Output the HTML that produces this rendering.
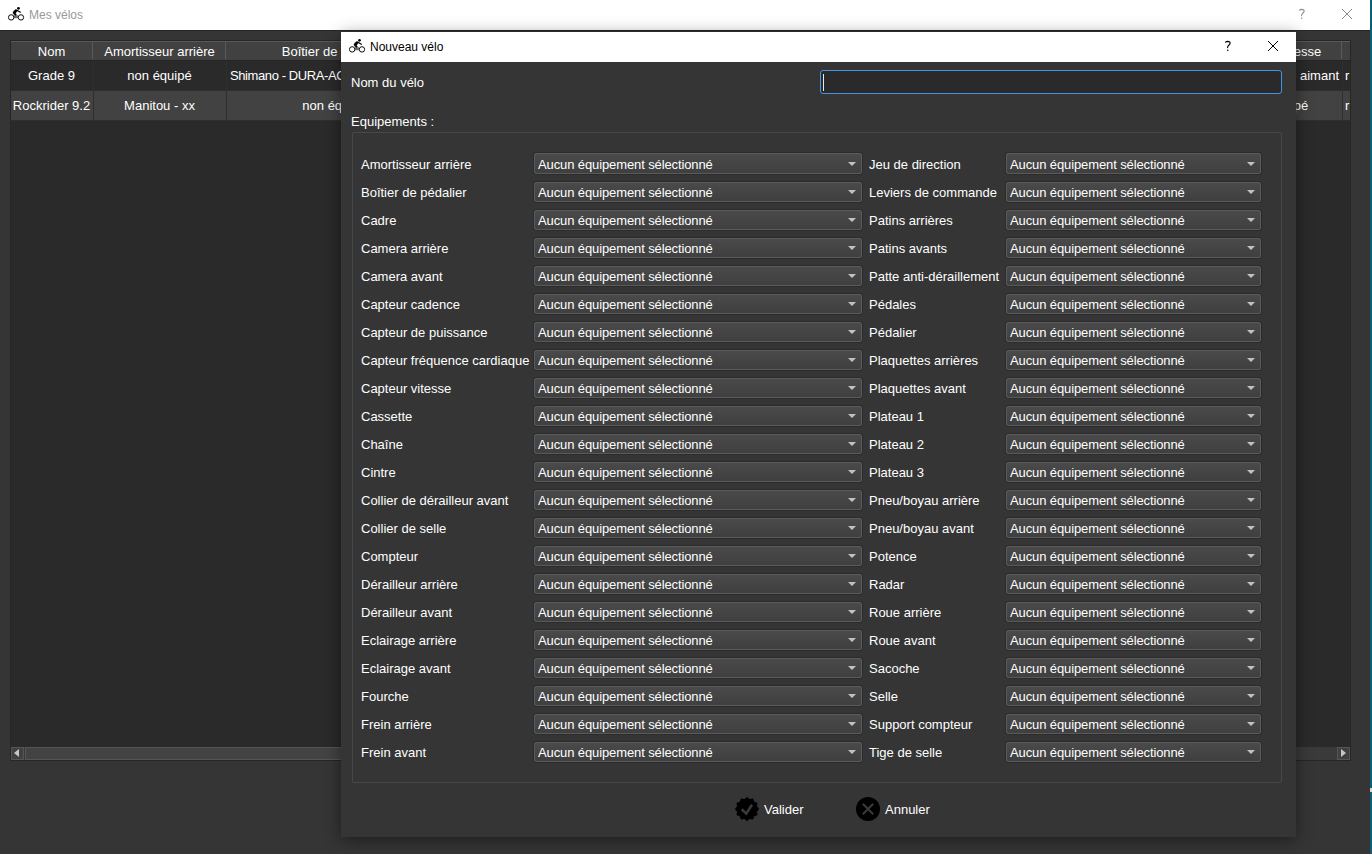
<!DOCTYPE html>
<html><head><meta charset="utf-8">
<style>
*{margin:0;padding:0;box-sizing:border-box}
html,body{width:1372px;height:854px;overflow:hidden;background:#353535;font-family:"Liberation Sans",sans-serif;}
.a{position:absolute}
.t{position:absolute;font-size:13px;line-height:15px;color:#fff;white-space:nowrap}
.cb{letter-spacing:-0.11px}
.tt{position:absolute;font-size:12px;line-height:14px;white-space:nowrap}
.bk{position:absolute}
.combo{position:absolute;height:21px;border:1px solid #5b5b5b;border-radius:2px;background:linear-gradient(#4a4a4a,#3f3f3f);box-shadow:0 0 0 1px rgba(0,0,0,0.18)}
.arr{position:absolute;width:0;height:0;border-left:4px solid transparent;border-right:4px solid transparent;border-top:4.5px solid #c2c2c2}
</style></head><body>
<div class="a" style="left:0;top:0;width:1370px;height:30px;background:#fff"></div>
<div class="a" style="left:0;top:30px;width:1370px;height:1px;background:#262626"></div>
<div class="a" style="left:1370px;top:0;width:2px;height:854px;background:#0f5e74"></div>
<div class="a" style="left:1370px;top:788px;width:2px;height:4px;background:#d8d8d8"></div>
<svg class="bk" style="left:5px;top:4px" width="22" height="20" viewBox="0 0 22 20">
<path d="M8.9 11.2 L12.9 11.2 L13.1 14.3 L8.9 14.3 Z" fill="#707070"/>
<circle cx="6.15" cy="13.4" r="2.7" fill="none" stroke="#000" stroke-width="0.95"/>
<circle cx="15.95" cy="13.4" r="2.7" fill="none" stroke="#000" stroke-width="0.95"/>
<circle cx="13.47" cy="4.33" r="1.35" fill="#000"/>
<path d="M10.2 5.6 L11.9 5.7 L12.7 6.6 L11.3 8.3 L10.6 9.4 L11.6 10.9 L10.4 11.6 L8.6 10.2 L7.9 8.6 L8.4 7.4 Z" fill="#000" stroke="#000" stroke-width="0.3" stroke-linejoin="round"/>
<path d="M11.9 6.2 L15.4 8.2" fill="none" stroke="#000" stroke-width="1.2" stroke-linecap="round"/>
</svg>
<div class="tt" style="left:29px;top:8px;color:#999">Mes vélos</div>
<svg class="a" style="left:1294px;top:5px" width="16" height="18" viewBox="0 0 16 18"><path d="M5.6 5.1 Q6.2 4.4 7.9 4.4 Q10.1 4.5 10.1 6.1 Q10.1 7.3 8.8 8.3 Q7.6 9.2 7.6 10.6" fill="none" stroke="#8f8f8f" stroke-width="1.15" stroke-linecap="round"/><circle cx="7.75" cy="13.2" r="0.8" fill="#8f8f8f"/></svg>\n<svg class="a" style="left:1341px;top:8px" width="12" height="12" viewBox="0 0 12 12"><path d="M1 1 L11 11 M11 1 L1 11" stroke="#8a8a8a" stroke-width="1"/></svg>
<div class="a" style="left:10px;top:40px;width:1341px;height:721px;background:#2a2a2a;border:1px solid #262626"></div>
<div class="a" style="left:11px;top:41px;width:1339px;height:19px;background:#414141;border-top:1px solid #595959"></div>
<div class="a" style="left:11px;top:60px;width:1339px;height:1px;background:#262626"></div>
<div class="a" style="left:11px;top:61px;width:1339px;height:29px;background:#2a2a2a"></div>
<div class="a" style="left:11px;top:91px;width:1339px;height:29px;background:#424242"></div>
<div class="a" style="left:11px;top:90px;width:1339px;height:1px;background:#2f2f2f"></div>
<div class="a" style="left:11px;top:120px;width:1339px;height:1px;background:#2f2f2f"></div>
<div class="a" style="left:92px;top:42px;width:1px;height:17px;background:#5a5a5a"></div>
<div class="a" style="left:93px;top:61px;width:1px;height:60px;background:#2f2f2f"></div>
<div class="a" style="left:225px;top:42px;width:1px;height:17px;background:#5a5a5a"></div>
<div class="a" style="left:226px;top:61px;width:1px;height:60px;background:#2f2f2f"></div>
<div class="a" style="left:442px;top:42px;width:1px;height:17px;background:#5a5a5a"></div>
<div class="a" style="left:443px;top:61px;width:1px;height:60px;background:#2f2f2f"></div>
<div class="a" style="left:1341px;top:42px;width:1px;height:17px;background:#5a5a5a"></div>
<div class="a" style="left:1342px;top:61px;width:1px;height:60px;background:#2f2f2f"></div>
<div class="t" style="left:11px;top:44px;width:81px;text-align:center">Nom</div>
<div class="t" style="left:93px;top:44px;width:133px;text-align:center">Amortisseur arrière</div>
<div class="t" style="left:227px;top:44px;width:215px;text-align:center">Boîtier de pédalier</div>
<div class="t" style="left:1211px;top:44px;width:130px;text-align:center">Capteur vitesse</div>
<div class="t" style="left:1342px;top:44px;width:100px;overflow:hidden;"></div>
<div class="t" style="left:11px;top:68px;width:81px;text-align:center">Grade 9</div>
<div class="t" style="left:93px;top:68px;width:133px;text-align:center">non équipé</div>
<div class="t" style="left:230px;top:68px;letter-spacing:-0.4px">Shimano - DURA-ACE</div>
<div class="t" style="left:1200px;top:68px;width:139px;text-align:right">Sigma - aimant</div>
<div class="t" style="left:1345px;top:68px;width:5px;overflow:hidden">r</div>
<div class="t" style="left:11px;top:98px;width:81px;text-align:center">Rockrider 9.2</div>
<div class="t" style="left:93px;top:98px;width:133px;text-align:center">Manitou - xx</div>
<div class="t" style="left:227px;top:98px;width:215px;text-align:center">non équipé</div>
<div class="t" style="left:1211px;top:98px;width:130px;text-align:center">non équipé</div>
<div class="t" style="left:1345px;top:98px;width:5px;overflow:hidden">r</div>
<div class="a" style="left:11px;top:747px;width:1339px;height:13px;background:#3a3a3a"></div>
<div class="a" style="left:11px;top:747px;width:13px;height:13px;background:#404040;border:1px solid #555"></div>
<div class="a" style="left:14px;top:749px;width:0;height:0;border-top:4.5px solid transparent;border-bottom:4.5px solid transparent;border-right:5px solid #c6c6c6"></div>
<div class="a" style="left:25px;top:747px;width:900px;height:13px;background:#434343;border:1px solid #555"></div>
<div class="a" style="left:1337px;top:747px;width:13px;height:13px;background:#404040;border:1px solid #555"></div>
<div class="a" style="left:1341px;top:749px;width:0;height:0;border-top:4.5px solid transparent;border-bottom:4.5px solid transparent;border-left:5px solid #c6c6c6"></div>
<div class="a" style="left:341px;top:32px;width:955px;height:805px;background:#353535;box-shadow:0 3px 16px rgba(0,0,0,0.45)"></div>
<div class="a" style="left:341px;top:32px;width:955px;height:30px;background:#fff"></div>
<svg class="bk" style="left:346px;top:36px" width="22" height="20" viewBox="0 0 22 20">
<path d="M8.9 11.2 L12.9 11.2 L13.1 14.3 L8.9 14.3 Z" fill="#707070"/>
<circle cx="6.15" cy="13.4" r="2.7" fill="none" stroke="#000" stroke-width="0.95"/>
<circle cx="15.95" cy="13.4" r="2.7" fill="none" stroke="#000" stroke-width="0.95"/>
<circle cx="13.47" cy="4.33" r="1.35" fill="#000"/>
<path d="M10.2 5.6 L11.9 5.7 L12.7 6.6 L11.3 8.3 L10.6 9.4 L11.6 10.9 L10.4 11.6 L8.6 10.2 L7.9 8.6 L8.4 7.4 Z" fill="#000" stroke="#000" stroke-width="0.3" stroke-linejoin="round"/>
<path d="M11.9 6.2 L15.4 8.2" fill="none" stroke="#000" stroke-width="1.2" stroke-linecap="round"/>
</svg>
<div class="tt" style="left:370px;top:40px;color:#000">Nouveau vélo</div>
<svg class="a" style="left:1220px;top:37px" width="16" height="18" viewBox="0 0 16 18"><path d="M5.6 5.1 Q6.2 4.4 7.9 4.4 Q10.1 4.5 10.1 6.1 Q10.1 7.3 8.8 8.3 Q7.6 9.2 7.6 10.6" fill="none" stroke="#000" stroke-width="1.15" stroke-linecap="round"/><circle cx="7.75" cy="13.2" r="0.8" fill="#000"/></svg>\n<svg class="a" style="left:1267px;top:40px" width="12" height="12" viewBox="0 0 12 12"><path d="M1 1 L11 11 M11 1 L1 11" stroke="#000" stroke-width="1"/></svg>
<div class="t" style="left:351px;top:75px;">Nom du vélo</div>
<div class="a" style="left:820px;top:70px;width:462px;height:24px;background:#2a2a2a;border:1px solid #4393e3;border-radius:3px"></div>
<div class="a" style="left:823px;top:74px;width:1px;height:17px;background:#e8e8e8"></div>
<div class="t" style="left:351px;top:114px;">Equipements :</div>
<div class="a" style="left:352px;top:132px;width:930px;height:651px;border:1px solid #484848;border-radius:2px"></div>
<div class="t" style="left:361px;top:157px;">Amortisseur arrière</div>
<div class="combo" style="left:534px;top:153px;width:328px;height:21px"></div>
<div class="t cb" style="left:538px;top:157px;">Aucun équipement sélectionné</div>
<div class="arr" style="left:848px;top:162px"></div>
<div class="t" style="left:869px;top:157px;">Jeu de direction</div>
<div class="combo" style="left:1006px;top:153px;width:255px;height:21px"></div>
<div class="t cb" style="left:1010px;top:157px;">Aucun équipement sélectionné</div>
<div class="arr" style="left:1247px;top:162px"></div>
<div class="t" style="left:361px;top:185px;">Boîtier de pédalier</div>
<div class="combo" style="left:534px;top:182px;width:328px;height:20px"></div>
<div class="t cb" style="left:538px;top:185px;">Aucun équipement sélectionné</div>
<div class="arr" style="left:848px;top:190px"></div>
<div class="t" style="left:869px;top:185px;">Leviers de commande</div>
<div class="combo" style="left:1006px;top:182px;width:255px;height:20px"></div>
<div class="t cb" style="left:1010px;top:185px;">Aucun équipement sélectionné</div>
<div class="arr" style="left:1247px;top:190px"></div>
<div class="t" style="left:361px;top:213px;">Cadre</div>
<div class="combo" style="left:534px;top:210px;width:328px;height:20px"></div>
<div class="t cb" style="left:538px;top:213px;">Aucun équipement sélectionné</div>
<div class="arr" style="left:848px;top:218px"></div>
<div class="t" style="left:869px;top:213px;">Patins arrières</div>
<div class="combo" style="left:1006px;top:210px;width:255px;height:20px"></div>
<div class="t cb" style="left:1010px;top:213px;">Aucun équipement sélectionné</div>
<div class="arr" style="left:1247px;top:218px"></div>
<div class="t" style="left:361px;top:241px;">Camera arrière</div>
<div class="combo" style="left:534px;top:238px;width:328px;height:20px"></div>
<div class="t cb" style="left:538px;top:241px;">Aucun équipement sélectionné</div>
<div class="arr" style="left:848px;top:246px"></div>
<div class="t" style="left:869px;top:241px;">Patins avants</div>
<div class="combo" style="left:1006px;top:238px;width:255px;height:20px"></div>
<div class="t cb" style="left:1010px;top:241px;">Aucun équipement sélectionné</div>
<div class="arr" style="left:1247px;top:246px"></div>
<div class="t" style="left:361px;top:269px;">Camera avant</div>
<div class="combo" style="left:534px;top:266px;width:328px;height:20px"></div>
<div class="t cb" style="left:538px;top:269px;">Aucun équipement sélectionné</div>
<div class="arr" style="left:848px;top:274px"></div>
<div class="t" style="left:869px;top:269px;">Patte anti-déraillement</div>
<div class="combo" style="left:1006px;top:266px;width:255px;height:20px"></div>
<div class="t cb" style="left:1010px;top:269px;">Aucun équipement sélectionné</div>
<div class="arr" style="left:1247px;top:274px"></div>
<div class="t" style="left:361px;top:297px;">Capteur cadence</div>
<div class="combo" style="left:534px;top:294px;width:328px;height:20px"></div>
<div class="t cb" style="left:538px;top:297px;">Aucun équipement sélectionné</div>
<div class="arr" style="left:848px;top:302px"></div>
<div class="t" style="left:869px;top:297px;">Pédales</div>
<div class="combo" style="left:1006px;top:294px;width:255px;height:20px"></div>
<div class="t cb" style="left:1010px;top:297px;">Aucun équipement sélectionné</div>
<div class="arr" style="left:1247px;top:302px"></div>
<div class="t" style="left:361px;top:325px;">Capteur de puissance</div>
<div class="combo" style="left:534px;top:322px;width:328px;height:20px"></div>
<div class="t cb" style="left:538px;top:325px;">Aucun équipement sélectionné</div>
<div class="arr" style="left:848px;top:330px"></div>
<div class="t" style="left:869px;top:325px;">Pédalier</div>
<div class="combo" style="left:1006px;top:322px;width:255px;height:20px"></div>
<div class="t cb" style="left:1010px;top:325px;">Aucun équipement sélectionné</div>
<div class="arr" style="left:1247px;top:330px"></div>
<div class="t" style="left:361px;top:353px;">Capteur fréquence cardiaque</div>
<div class="combo" style="left:534px;top:350px;width:328px;height:20px"></div>
<div class="t cb" style="left:538px;top:353px;">Aucun équipement sélectionné</div>
<div class="arr" style="left:848px;top:358px"></div>
<div class="t" style="left:869px;top:353px;">Plaquettes arrières</div>
<div class="combo" style="left:1006px;top:350px;width:255px;height:20px"></div>
<div class="t cb" style="left:1010px;top:353px;">Aucun équipement sélectionné</div>
<div class="arr" style="left:1247px;top:358px"></div>
<div class="t" style="left:361px;top:381px;">Capteur vitesse</div>
<div class="combo" style="left:534px;top:378px;width:328px;height:20px"></div>
<div class="t cb" style="left:538px;top:381px;">Aucun équipement sélectionné</div>
<div class="arr" style="left:848px;top:386px"></div>
<div class="t" style="left:869px;top:381px;">Plaquettes avant</div>
<div class="combo" style="left:1006px;top:378px;width:255px;height:20px"></div>
<div class="t cb" style="left:1010px;top:381px;">Aucun équipement sélectionné</div>
<div class="arr" style="left:1247px;top:386px"></div>
<div class="t" style="left:361px;top:409px;">Cassette</div>
<div class="combo" style="left:534px;top:406px;width:328px;height:20px"></div>
<div class="t cb" style="left:538px;top:409px;">Aucun équipement sélectionné</div>
<div class="arr" style="left:848px;top:414px"></div>
<div class="t" style="left:869px;top:409px;">Plateau 1</div>
<div class="combo" style="left:1006px;top:406px;width:255px;height:20px"></div>
<div class="t cb" style="left:1010px;top:409px;">Aucun équipement sélectionné</div>
<div class="arr" style="left:1247px;top:414px"></div>
<div class="t" style="left:361px;top:437px;">Chaîne</div>
<div class="combo" style="left:534px;top:434px;width:328px;height:20px"></div>
<div class="t cb" style="left:538px;top:437px;">Aucun équipement sélectionné</div>
<div class="arr" style="left:848px;top:442px"></div>
<div class="t" style="left:869px;top:437px;">Plateau 2</div>
<div class="combo" style="left:1006px;top:434px;width:255px;height:20px"></div>
<div class="t cb" style="left:1010px;top:437px;">Aucun équipement sélectionné</div>
<div class="arr" style="left:1247px;top:442px"></div>
<div class="t" style="left:361px;top:465px;">Cintre</div>
<div class="combo" style="left:534px;top:462px;width:328px;height:20px"></div>
<div class="t cb" style="left:538px;top:465px;">Aucun équipement sélectionné</div>
<div class="arr" style="left:848px;top:470px"></div>
<div class="t" style="left:869px;top:465px;">Plateau 3</div>
<div class="combo" style="left:1006px;top:462px;width:255px;height:20px"></div>
<div class="t cb" style="left:1010px;top:465px;">Aucun équipement sélectionné</div>
<div class="arr" style="left:1247px;top:470px"></div>
<div class="t" style="left:361px;top:493px;">Collier de dérailleur avant</div>
<div class="combo" style="left:534px;top:490px;width:328px;height:20px"></div>
<div class="t cb" style="left:538px;top:493px;">Aucun équipement sélectionné</div>
<div class="arr" style="left:848px;top:498px"></div>
<div class="t" style="left:869px;top:493px;">Pneu/boyau arrière</div>
<div class="combo" style="left:1006px;top:490px;width:255px;height:20px"></div>
<div class="t cb" style="left:1010px;top:493px;">Aucun équipement sélectionné</div>
<div class="arr" style="left:1247px;top:498px"></div>
<div class="t" style="left:361px;top:521px;">Collier de selle</div>
<div class="combo" style="left:534px;top:518px;width:328px;height:20px"></div>
<div class="t cb" style="left:538px;top:521px;">Aucun équipement sélectionné</div>
<div class="arr" style="left:848px;top:526px"></div>
<div class="t" style="left:869px;top:521px;">Pneu/boyau avant</div>
<div class="combo" style="left:1006px;top:518px;width:255px;height:20px"></div>
<div class="t cb" style="left:1010px;top:521px;">Aucun équipement sélectionné</div>
<div class="arr" style="left:1247px;top:526px"></div>
<div class="t" style="left:361px;top:549px;">Compteur</div>
<div class="combo" style="left:534px;top:546px;width:328px;height:20px"></div>
<div class="t cb" style="left:538px;top:549px;">Aucun équipement sélectionné</div>
<div class="arr" style="left:848px;top:554px"></div>
<div class="t" style="left:869px;top:549px;">Potence</div>
<div class="combo" style="left:1006px;top:546px;width:255px;height:20px"></div>
<div class="t cb" style="left:1010px;top:549px;">Aucun équipement sélectionné</div>
<div class="arr" style="left:1247px;top:554px"></div>
<div class="t" style="left:361px;top:577px;">Dérailleur arrière</div>
<div class="combo" style="left:534px;top:574px;width:328px;height:20px"></div>
<div class="t cb" style="left:538px;top:577px;">Aucun équipement sélectionné</div>
<div class="arr" style="left:848px;top:582px"></div>
<div class="t" style="left:869px;top:577px;">Radar</div>
<div class="combo" style="left:1006px;top:574px;width:255px;height:20px"></div>
<div class="t cb" style="left:1010px;top:577px;">Aucun équipement sélectionné</div>
<div class="arr" style="left:1247px;top:582px"></div>
<div class="t" style="left:361px;top:605px;">Dérailleur avant</div>
<div class="combo" style="left:534px;top:602px;width:328px;height:20px"></div>
<div class="t cb" style="left:538px;top:605px;">Aucun équipement sélectionné</div>
<div class="arr" style="left:848px;top:610px"></div>
<div class="t" style="left:869px;top:605px;">Roue arrière</div>
<div class="combo" style="left:1006px;top:602px;width:255px;height:20px"></div>
<div class="t cb" style="left:1010px;top:605px;">Aucun équipement sélectionné</div>
<div class="arr" style="left:1247px;top:610px"></div>
<div class="t" style="left:361px;top:633px;">Eclairage arrière</div>
<div class="combo" style="left:534px;top:630px;width:328px;height:20px"></div>
<div class="t cb" style="left:538px;top:633px;">Aucun équipement sélectionné</div>
<div class="arr" style="left:848px;top:638px"></div>
<div class="t" style="left:869px;top:633px;">Roue avant</div>
<div class="combo" style="left:1006px;top:630px;width:255px;height:20px"></div>
<div class="t cb" style="left:1010px;top:633px;">Aucun équipement sélectionné</div>
<div class="arr" style="left:1247px;top:638px"></div>
<div class="t" style="left:361px;top:661px;">Eclairage avant</div>
<div class="combo" style="left:534px;top:658px;width:328px;height:20px"></div>
<div class="t cb" style="left:538px;top:661px;">Aucun équipement sélectionné</div>
<div class="arr" style="left:848px;top:666px"></div>
<div class="t" style="left:869px;top:661px;">Sacoche</div>
<div class="combo" style="left:1006px;top:658px;width:255px;height:20px"></div>
<div class="t cb" style="left:1010px;top:661px;">Aucun équipement sélectionné</div>
<div class="arr" style="left:1247px;top:666px"></div>
<div class="t" style="left:361px;top:689px;">Fourche</div>
<div class="combo" style="left:534px;top:686px;width:328px;height:20px"></div>
<div class="t cb" style="left:538px;top:689px;">Aucun équipement sélectionné</div>
<div class="arr" style="left:848px;top:694px"></div>
<div class="t" style="left:869px;top:689px;">Selle</div>
<div class="combo" style="left:1006px;top:686px;width:255px;height:20px"></div>
<div class="t cb" style="left:1010px;top:689px;">Aucun équipement sélectionné</div>
<div class="arr" style="left:1247px;top:694px"></div>
<div class="t" style="left:361px;top:717px;">Frein arrière</div>
<div class="combo" style="left:534px;top:714px;width:328px;height:20px"></div>
<div class="t cb" style="left:538px;top:717px;">Aucun équipement sélectionné</div>
<div class="arr" style="left:848px;top:722px"></div>
<div class="t" style="left:869px;top:717px;">Support compteur</div>
<div class="combo" style="left:1006px;top:714px;width:255px;height:20px"></div>
<div class="t cb" style="left:1010px;top:717px;">Aucun équipement sélectionné</div>
<div class="arr" style="left:1247px;top:722px"></div>
<div class="t" style="left:361px;top:745px;">Frein avant</div>
<div class="combo" style="left:534px;top:742px;width:328px;height:20px"></div>
<div class="t cb" style="left:538px;top:745px;">Aucun équipement sélectionné</div>
<div class="arr" style="left:848px;top:750px"></div>
<div class="t" style="left:869px;top:745px;">Tige de selle</div>
<div class="combo" style="left:1006px;top:742px;width:255px;height:20px"></div>
<div class="t cb" style="left:1010px;top:745px;">Aucun équipement sélectionné</div>
<div class="arr" style="left:1247px;top:750px"></div>
<svg class="a" style="left:735px;top:797px" width="24" height="24" viewBox="0 0 24 24">
<path fill="#000" d="M12.00 0.15 L12.31 0.19 L12.61 0.31 L12.91 0.49 L13.18 0.73 L13.45 0.99 L13.70 1.27 L13.94 1.52 L14.18 1.74 L14.42 1.90 L14.68 2.00 L14.95 2.04 L15.24 2.02 L15.56 1.95 L15.89 1.85 L16.25 1.74 L16.61 1.65 L16.97 1.58 L17.31 1.57 L17.64 1.62 L17.92 1.74 L18.17 1.93 L18.38 2.18 L18.54 2.49 L18.66 2.83 L18.76 3.19 L18.84 3.55 L18.92 3.89 L19.02 4.20 L19.15 4.47 L19.32 4.68 L19.53 4.85 L19.80 4.98 L20.11 5.08 L20.45 5.16 L20.81 5.24 L21.17 5.34 L21.51 5.46 L21.82 5.62 L22.07 5.83 L22.26 6.07 L22.38 6.36 L22.43 6.69 L22.42 7.03 L22.35 7.39 L22.26 7.75 L22.15 8.11 L22.05 8.44 L21.98 8.76 L21.96 9.05 L22.00 9.32 L22.10 9.58 L22.26 9.82 L22.48 10.06 L22.73 10.30 L23.01 10.55 L23.27 10.82 L23.51 11.09 L23.69 11.39 L23.81 11.69 L23.85 12.00 L23.81 12.31 L23.69 12.61 L23.51 12.91 L23.27 13.18 L23.01 13.45 L22.73 13.70 L22.48 13.94 L22.26 14.18 L22.10 14.42 L22.00 14.68 L21.96 14.95 L21.98 15.24 L22.05 15.56 L22.15 15.89 L22.26 16.25 L22.35 16.61 L22.42 16.97 L22.43 17.31 L22.38 17.64 L22.26 17.92 L22.07 18.17 L21.82 18.38 L21.51 18.54 L21.17 18.66 L20.81 18.76 L20.45 18.84 L20.11 18.92 L19.80 19.02 L19.53 19.15 L19.32 19.32 L19.15 19.53 L19.02 19.80 L18.92 20.11 L18.84 20.45 L18.76 20.81 L18.66 21.17 L18.54 21.51 L18.38 21.82 L18.17 22.07 L17.92 22.26 L17.64 22.38 L17.31 22.43 L16.97 22.42 L16.61 22.35 L16.25 22.26 L15.89 22.15 L15.56 22.05 L15.24 21.98 L14.95 21.96 L14.68 22.00 L14.42 22.10 L14.18 22.26 L13.94 22.48 L13.70 22.73 L13.45 23.01 L13.18 23.27 L12.91 23.51 L12.61 23.69 L12.31 23.81 L12.00 23.85 L11.69 23.81 L11.39 23.69 L11.09 23.51 L10.82 23.27 L10.55 23.01 L10.30 22.73 L10.06 22.48 L9.82 22.26 L9.58 22.10 L9.32 22.00 L9.05 21.96 L8.76 21.98 L8.44 22.05 L8.11 22.15 L7.75 22.26 L7.39 22.35 L7.03 22.42 L6.69 22.43 L6.36 22.38 L6.08 22.26 L5.83 22.07 L5.62 21.82 L5.46 21.51 L5.34 21.17 L5.24 20.81 L5.16 20.45 L5.08 20.11 L4.98 19.80 L4.85 19.53 L4.68 19.32 L4.47 19.15 L4.20 19.02 L3.89 18.92 L3.55 18.84 L3.19 18.76 L2.83 18.66 L2.49 18.54 L2.18 18.38 L1.93 18.17 L1.74 17.93 L1.62 17.64 L1.57 17.31 L1.58 16.97 L1.65 16.61 L1.74 16.25 L1.85 15.89 L1.95 15.56 L2.02 15.24 L2.04 14.95 L2.00 14.68 L1.90 14.42 L1.74 14.18 L1.52 13.94 L1.27 13.70 L0.99 13.45 L0.73 13.18 L0.49 12.91 L0.31 12.61 L0.19 12.31 L0.15 12.00 L0.19 11.69 L0.31 11.39 L0.49 11.09 L0.73 10.82 L0.99 10.55 L1.27 10.30 L1.52 10.06 L1.74 9.82 L1.90 9.58 L2.00 9.32 L2.04 9.05 L2.02 8.76 L1.95 8.44 L1.85 8.11 L1.74 7.75 L1.65 7.39 L1.58 7.03 L1.57 6.69 L1.62 6.36 L1.74 6.07 L1.93 5.83 L2.18 5.62 L2.49 5.46 L2.83 5.34 L3.19 5.24 L3.55 5.16 L3.89 5.08 L4.20 4.98 L4.47 4.85 L4.68 4.68 L4.85 4.47 L4.98 4.20 L5.08 3.89 L5.16 3.55 L5.24 3.19 L5.34 2.83 L5.46 2.49 L5.62 2.18 L5.83 1.93 L6.08 1.74 L6.36 1.62 L6.69 1.57 L7.03 1.58 L7.39 1.65 L7.75 1.74 L8.11 1.85 L8.44 1.95 L8.76 2.02 L9.05 2.04 L9.32 2.00 L9.58 1.90 L9.82 1.74 L10.06 1.52 L10.30 1.27 L10.55 0.99 L10.82 0.73 L11.09 0.49 L11.39 0.31 L11.69 0.19 Z"/>
<path d="M6.7 12.3 L11.3 16.6 L17 7.8" fill="none" stroke="#3a3a3a" stroke-width="2.6"/>
</svg>
<div class="t" style="left:764px;top:802px;">Valider</div>
<svg class="a" style="left:856px;top:797px" width="24" height="24" viewBox="0 0 24 24">
<circle cx="12" cy="12" r="12" fill="#000"/>
<path d="M6.8 6.8 L17.2 17.2 M17.2 6.8 L6.8 17.2" stroke="#3a3a3a" stroke-width="2"/>
</svg>
<div class="t" style="left:885px;top:802px;">Annuler</div>
</body></html>
